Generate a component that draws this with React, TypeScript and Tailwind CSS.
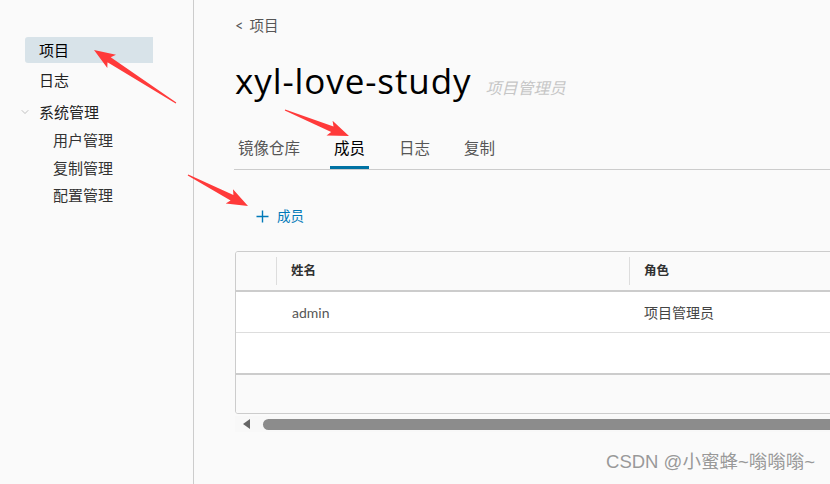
import { ChevronDown } from "lucide-react";

const FONT = "font-['Lato','Noto_Sans_CJK_SC',sans-serif]";

type Pt = [number, number];

// red annotation arrow, tapered shaft + head
function arrowPoints(tail: Pt, tip: Pt, headLen = 18, headHalf = 8, shaftHalf = 3) {
  const dx = tip[0] - tail[0];
  const dy = tip[1] - tail[1];
  const len = Math.hypot(dx, dy);
  const ux = dx / len;
  const uy = dy / len;
  const nx = -uy;
  const ny = ux;
  const bx = tip[0] - ux * headLen;
  const by = tip[1] - uy * headLen;
  const pts: Pt[] = [
    [tail[0] + nx * 0.6, tail[1] + ny * 0.6],
    [bx + nx * shaftHalf, by + ny * shaftHalf],
    [bx - ux * 3 + nx * headHalf, by - uy * 3 + ny * headHalf],
    tip,
    [bx - ux * 3 - nx * headHalf, by - uy * 3 - ny * headHalf],
    [bx - nx * shaftHalf, by - ny * shaftHalf],
    [tail[0] - nx * 0.6, tail[1] - ny * 0.6],
  ];
  return pts.map((p) => `${p[0].toFixed(1)},${p[1].toFixed(1)}`).join(" ");
}

const arrows: { tail: Pt; tip: Pt }[] = [
  { tail: [176, 103], tip: [94, 50] },
  { tail: [285, 110], tip: [349, 136] },
  { tail: [188, 175], tip: [248, 206] },
];

function Sidebar() {
  return (
    <aside className="w-[194px] shrink-0 h-full bg-[#fafafa] border-r border-[#cccccc] pt-[37px] text-[15px] text-[#222]">
      <div className="ml-[25px] w-[128px] h-[26px] rounded-l-[3px] bg-[#d8e3e9] flex items-center pl-[14px] text-black">
        项目
      </div>
      <div className="h-[28px] flex items-center pl-[39px] mt-[3px]">日志</div>
      <div className="h-[28px] flex items-center pl-[19px] mt-[4px]">
        <ChevronDown size={12} strokeWidth={1.3} className="text-[#a0a0a0] mr-[8px]" />
        系统管理
      </div>
      <div className="pl-[53px] text-[#333] mt-[1px]">
        <div className="h-[27px] flex items-center">用户管理</div>
        <div className="h-[28px] flex items-center">复制管理</div>
        <div className="h-[27px] flex items-center">配置管理</div>
      </div>
    </aside>
  );
}

function MembersTable() {
  return (
    <div className="mt-[23px] w-[700px]">
      <div className="border border-[#cccccc] rounded-[3px] overflow-hidden bg-white">
        <div className="flex h-[40px] bg-[#fafafa] border-b-2 border-[#cccccc] text-[12.5px] font-bold text-[#313131]">
          <div className="w-[41px] shrink-0 border-r border-[#dddddd] my-[5px]" />
          <div className="w-[353px] shrink-0 flex items-center pl-[14px] border-r border-[#dddddd] my-[5px]">
            姓名
          </div>
          <div className="flex-1 flex items-center pl-[14px]">角色</div>
        </div>
        <div className="flex h-[41px] border-b border-[#dddddd] text-[14px] items-center">
          <div className="w-[41px] shrink-0" />
          <div className="w-[353px] shrink-0 pl-[15px] text-[#565656]">admin</div>
          <div className="flex-1 pl-[14px] text-[#444]">项目管理员</div>
        </div>
        <div className="h-[42px] border-b-2 border-[#cccccc]" />
        <div className="h-[38px] bg-[#fafafa]" />
      </div>
      <div className="h-[16px] mt-[2px] flex items-center pl-[8px] bg-[#f8f8f8]">
        <div className="w-0 h-0 border-y-[5px] border-y-transparent border-r-[7px] border-r-[#666]" />
        <div className="ml-[13px] flex-1 h-[11px] rounded-full bg-[#8c8c8c]" />
      </div>
    </div>
  );
}

export default function App() {
  const tabs = ["镜像仓库", "成员", "日志", "复制"];
  return (
    <div className={`relative w-[830px] h-[484px] overflow-hidden bg-[#fafafa] flex ${FONT}`}>
      <Sidebar />
      <main className="flex-1 pl-[41px] pt-[17px] min-w-0">
        <div className="h-[18px] flex items-center text-[14.5px] text-[#565656]">
          <span className="mr-[6px]">&lt;</span>项目
        </div>
        <div className="mt-[26px] h-[40px] flex items-baseline">
          <h1 className="font-['Open_Sans','Noto_Sans_CJK_SC',sans-serif] text-[35px] leading-[40px] text-black font-normal tracking-[0.9px]">
            xyl-love-study
          </h1>
          <span className="ml-[14px] text-[16px] italic text-[#c6c6c6]">项目管理员</span>
        </div>
        <div className="mt-[30px] flex gap-[26px] border-b border-[#cccccc] text-[15.5px] -ml-[1px]">
          {tabs.map((t) => (
            <div
              key={t}
              className={
                t === "成员"
                  ? "h-[38px] px-[4px] flex items-center border-b-[3px] border-[#0072a3] text-black"
                  : "h-[38px] px-[4px] flex items-center border-b-[3px] border-transparent text-[#565656]"
              }
            >
              {t}
            </div>
          ))}
        </div>
        <div className="mt-[34px] ml-[21px] h-[24px] flex items-center text-[13.5px] text-[#0079b8]">
          <svg width="13" height="13" viewBox="0 0 13 13" className="mr-[8px]">
            <path d="M6.5 0.5v12M0.5 6.5h12" stroke="#0079b8" strokeWidth="1.4" />
          </svg>
          成员
        </div>
        <MembersTable />
      </main>

      <svg className="absolute inset-0 pointer-events-none" width="830" height="484">
        {arrows.map((a, i) => (
          <polygon key={i} points={arrowPoints(a.tail, a.tip)} fill="#ff3a3a" />
        ))}
      </svg>

      <div className="absolute right-[15px] bottom-[8px] text-[18.5px] text-[#999] font-['Liberation_Sans','Noto_Sans_CJK_SC',sans-serif] [text-shadow:0_0_2px_#fff]">
        CSDN @小蜜蜂~嗡嗡嗡~
      </div>
    </div>
  );
}
